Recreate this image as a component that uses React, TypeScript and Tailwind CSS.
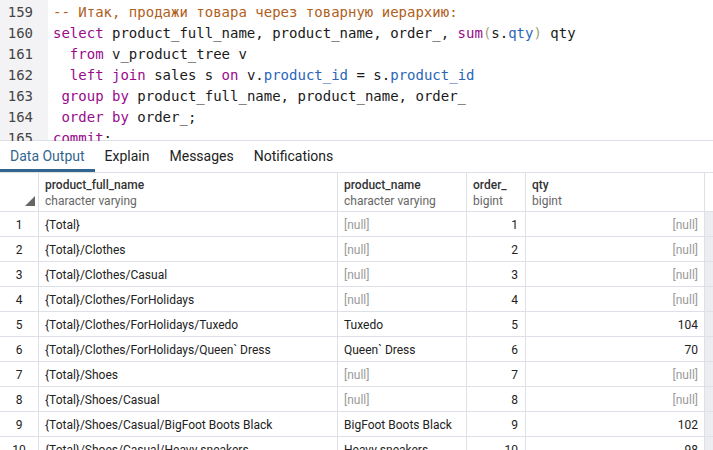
import React from "react";

const K = ({ children }: { children: React.ReactNode }) => (
  <span className="text-[#990a8c]">{children}</span>
);
const P = ({ children }: { children: React.ReactNode }) => (
  <span className="text-[#2a66b8]">{children}</span>
);
const B = ({ children }: { children: React.ReactNode }) => (
  <span className="text-[#a3a37c]">{children}</span>
);

const lines: [string, React.ReactNode][] = [
  ["159", <span className="text-[#b0601c]">-- Итак, продажи товара через товарную иерархию:</span>],
  [
    "160",
    <>
      <K>select</K> product_full_name, product_name, order_, <K>sum</K>
      <B>(</B>s.<P>qty</P>
      <B>)</B> qty
    </>,
  ],
  [
    "161",
    <>
      {"  "}
      <K>from</K> v_product_tree v
    </>,
  ],
  [
    "162",
    <>
      {"  "}
      <K>left</K> <K>join</K> sales s <K>on</K> v.<P>product_id</P> = s.<P>product_id</P>
    </>,
  ],
  [
    "163",
    <>
      {" "}
      <K>group</K> <K>by</K> product_full_name, product_name, order_
    </>,
  ],
  [
    "164",
    <>
      {" "}
      <K>order</K> <K>by</K> order_;
    </>,
  ],
  ["165", <><K>commit</K>;</>],
];

type Row = [string, string, string | null, string, string | null];
const rows: Row[] = [
  ["1", "{Total}", null, "1", null],
  ["2", "{Total}/Clothes", null, "2", null],
  ["3", "{Total}/Clothes/Casual", null, "3", null],
  ["4", "{Total}/Clothes/ForHolidays", null, "4", null],
  ["5", "{Total}/Clothes/ForHolidays/Tuxedo", "Tuxedo", "5", "104"],
  ["6", "{Total}/Clothes/ForHolidays/Queen` Dress", "Queen` Dress", "6", "70"],
  ["7", "{Total}/Shoes", null, "7", null],
  ["8", "{Total}/Shoes/Casual", null, "8", null],
  ["9", "{Total}/Shoes/Casual/BigFoot Boots Black", "BigFoot Boots Black", "9", "102"],
  ["10", "{Total}/Shoes/Casual/Heavy sneakers", "Heavy sneakers", "10", "98"],
];

const Null = () => <span className="text-[#9a9a9a]">[null]</span>;

export default function App() {
  return (
    <div
      className="w-[713px] h-[450px] overflow-hidden bg-white flex flex-col"
      style={{ fontFamily: "Roboto, 'Liberation Sans', sans-serif" }}
    >
      {/* Editor */}
      <div className="h-[141px] shrink-0 flex overflow-hidden border-b border-[#dde0e6]">
        <div className="w-[48px] shrink-0 bg-[#f3f3f5]" />
        <div className="flex-1" />
      </div>
      <div className="h-0 relative">
        <div
          className="absolute left-0 top-[-140px] w-full h-[140px] overflow-hidden pt-[1px]"
          style={{ fontFamily: "'DejaVu Sans Mono', monospace" }}
        >
          {lines.map(([n, code]) => (
            <div key={n} className="flex h-[21px] leading-[21px] text-[14px] whitespace-pre">
              <div className="w-[48px] shrink-0 pr-[15px] text-right text-[#444]">{n}</div>
              <div className="pl-[5px] text-[#1a1a1a]">{code}</div>
            </div>
          ))}
        </div>
      </div>

      {/* Tabs */}
      <div className="h-[32px] shrink-0 flex items-stretch text-[14px] text-[#222] border-b border-[#dde0e6]">
        <div className="px-[10px] flex items-center text-[#326690] border-b-[3px] border-[#326690] pt-[3px]">
          Data Output
        </div>
        <div className="px-[10px] flex items-center">Explain</div>
        <div className="px-[10px] flex items-center">Messages</div>
        <div className="px-[10px] flex items-center">Notifications</div>
      </div>

      {/* Grid */}
      <div className="flex-1 flex flex-col text-[12px] text-[#222]">
        <div className="flex h-[39px] shrink-0 border-b border-[#dde0e6]">
          <div className="w-[39px] shrink-0 border-r border-[#dde0e6] relative">
            <svg className="absolute right-[3px] bottom-[5px]" width="10" height="10" viewBox="0 0 10 10">
              <polygon points="10,0 10,10 0,10" fill="#666" />
            </svg>
          </div>
          {[
            ["product_full_name", "character varying", "w-[299px]"],
            ["product_name", "character varying", "w-[129px]"],
            ["order_", "bigint", "w-[59px]"],
            ["qty", "bigint", "w-[179px]"],
          ].map(([a, b, w]) => (
            <div key={a} className={`${w} shrink-0 border-r border-[#dde0e6] pl-[6px] pt-[4px] leading-[16px]`}>
              <div className="font-medium text-[#333]">{a}</div>
              <div className="text-[#666]">{b}</div>
            </div>
          ))}
          <div className="flex-1" />
        </div>
        {rows.map((r) => (
          <div key={r[0]} className="flex h-[25px] shrink-0 border-b border-[#dde0e6] leading-[24px] pt-[1px]">
            <div className="w-[39px] shrink-0 border-r border-[#dde0e6] text-center -mt-[1px] pt-[1px]">{r[0]}</div>
            <div className="w-[299px] shrink-0 border-r border-[#dde0e6] pl-[6px] -mt-[1px] pt-[1px]">{r[1]}</div>
            <div className="w-[129px] shrink-0 border-r border-[#dde0e6] pl-[6px] -mt-[1px] pt-[1px]">
              {r[2] === null ? <Null /> : r[2]}
            </div>
            <div className="w-[59px] shrink-0 border-r border-[#dde0e6] text-right pr-[7px] -mt-[1px] pt-[1px]">{r[3]}</div>
            <div className="w-[179px] shrink-0 border-r border-[#dde0e6] text-right pr-[6px] -mt-[1px] pt-[1px]">
              {r[4] === null ? <Null /> : r[4]}
            </div>
            <div className="flex-1 bg-[#ebedf1] -mt-[1px]" />
          </div>
        ))}
      </div>
    </div>
  );
}
